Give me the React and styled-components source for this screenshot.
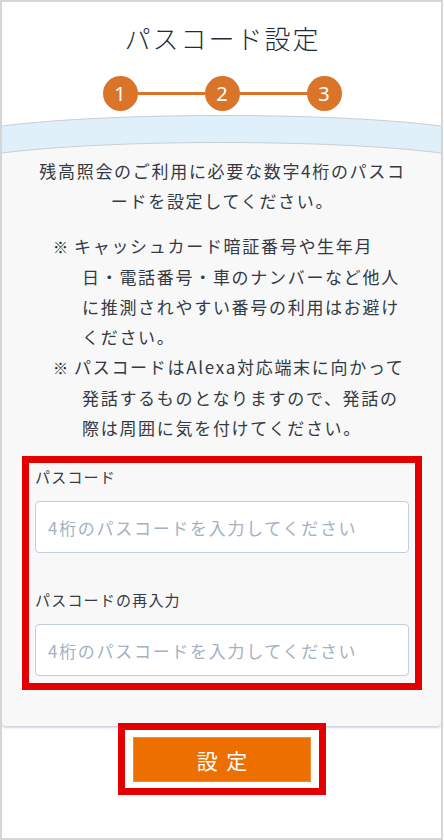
import React from 'react';
import styled, { createGlobalStyle } from 'styled-components';

const GlobalStyle = createGlobalStyle`
  html, body { margin: 0; padding: 0; background: #fff; }
  body {
    font-family: "Noto Sans CJK JP", "Noto Sans", sans-serif;
    color: #333a44;
  }
  * { box-sizing: border-box; }
`;

const Frame = styled.div`
  width: 443px;
  height: 840px;
  border: 2px solid #d5d5d5;
  background: #fff;
  display: flex;
  flex-direction: column;
  overflow: hidden;
`;

const Header = styled.header`
  display: flex;
  flex-direction: column;
  align-items: center;
  padding-top: 18px;
`;

const Title = styled.h1`
  margin: 0;
  font-size: 26px;
  font-weight: 300;
  line-height: 36px;
  letter-spacing: 2px;
  padding-left: 2px;
  color: #1d2a3a;
`;

const Steps = styled.div`
  display: flex;
  align-items: center;
  margin-top: 20px;
  margin-left: 1px;
`;

const StepCircle = styled.div`
  width: 35px;
  height: 35px;
  border-radius: 50%;
  background: #d97429;
  color: #fff;
  display: flex;
  align-items: center;
  justify-content: center;
  font-family: "Noto Sans", sans-serif;
  font-size: 20px;
  line-height: 1;
`;

const Connector = styled.div`
  width: 67px;
  height: 3px;
  background: #d97429;
`;

const WaveSvg = styled.svg`
  display: block;
  width: 439px;
  height: 40px;
  margin-top: 4px;
`;

const Panel = styled.main`
  background: #f8f8f8;
  display: flex;
  flex-direction: column;
  padding-bottom: 36px;
  border-radius: 0 0 4px 4px;
  box-shadow: 0 2px 2px rgba(120, 140, 165, 0.35);
`;

const Lead = styled.p`
  margin: 1px 0 0;
  text-align: center;
  font-size: 17px;
  line-height: 30px;
  letter-spacing: 1.7px;
  padding-left: 2px;
`;

const Notes = styled.ul`
  list-style: none;
  margin: 15px 0 0;
  padding: 0 0 0 80px;
  font-size: 17px;
  line-height: 30px;
  letter-spacing: 1.7px;
  white-space: nowrap;
`;

const Note = styled.li`
  text-indent: -29px;
`;

const Mark = styled.span`
  display: inline-block;
  width: 21px;
  text-indent: 0;
  font-size: 15px;
  letter-spacing: 0;
  color: #222831;
`;

const FormBox = styled.form`
  margin: 13px 19px 0 20px;
  border: 7px solid #e20000;
  padding: 2px 6px 7px;
  display: flex;
  flex-direction: column;
`;

const Label = styled.label`
  display: block;
  font-size: 15px;
  line-height: 24px;
  letter-spacing: 1.2px;
  color: #343c47;
  margin-top: ${(p) => (p.$second ? '35px' : '0')};
`;

const Input = styled.input`
  display: block;
  width: 100%;
  height: 52px;
  margin-top: 12px;
  border: 1px solid #c3cfdd;
  border-radius: 4px;
  background: #fff;
  padding: 0 12px;
  font-family: inherit;
  font-size: 17px;
  letter-spacing: 1.7px;
  color: #333a44;
  outline: none;
  &::placeholder {
    color: #a3b1c2;
  }
`;

const ButtonArea = styled.div`
  display: flex;
  justify-content: center;
  margin-top: -3px;
  position: relative;
  padding-left: 1px;
`;

const ButtonFrame = styled.div`
  border: 7px solid #e20000;
  padding: 7px 8px 6px;
  background: #fff;
`;

const SubmitButton = styled.button`
  display: flex;
  align-items: center;
  justify-content: center;
  width: 178px;
  height: 45px;
  background: #ec6f00;
  border: 1px solid #f38b35;
  color: #fff;
  font-family: "Noto Sans CJK JP", sans-serif;
  font-size: 21px;
  letter-spacing: 2px;
  padding: 0 0 0 2px;
  cursor: pointer;
`;

function Wave() {
  return (
    <WaveSvg viewBox="0 0 439 40" preserveAspectRatio="none">
      <path d="M0 11 C 110 -3, 330 -3, 439 11 L 439 38 C 330 24, 110 24, 0 38 Z" fill="#dff0fb" />
      <path d="M0 38 C 110 24, 330 24, 439 38 L 439 40 L 0 40 Z" fill="#f8f8f8" />
      <path d="M0 11 C 110 -3, 330 -3, 439 11" fill="none" stroke="#c9ced3" strokeWidth="1" />
      <path d="M0 38 C 110 24, 330 24, 439 38" fill="none" stroke="#c9ced3" strokeWidth="1" />
    </WaveSvg>
  );
}

export default function App() {
  return (
    <>
      <GlobalStyle />
      <Frame>
        <Header>
          <Title>パスコード設定</Title>
          <Steps>
            <StepCircle>1</StepCircle>
            <Connector />
            <StepCircle>2</StepCircle>
            <Connector />
            <StepCircle>3</StepCircle>
          </Steps>
        </Header>
        <Wave />
        <Panel>
          <Lead>
            残高照会のご利用に必要な数字4桁のパスコ
            <br />
            ードを設定してください。
          </Lead>
          <Notes>
            <Note>
              <Mark>※</Mark>キャッシュカード暗証番号や生年月
              <br />
              日・電話番号・車のナンバーなど他人
              <br />
              に推測されやすい番号の利用はお避け
              <br />
              ください。
            </Note>
            <Note>
              <Mark>※</Mark>パスコードはAlexa対応端末に向かって
              <br />
              発話するものとなりますので、発話の
              <br />
              際は周囲に気を付けてください。
            </Note>
          </Notes>
          <FormBox onSubmit={(e) => e.preventDefault()}>
            <Label htmlFor="pc1">パスコード</Label>
            <Input id="pc1" type="password" placeholder="4桁のパスコードを入力してください" />
            <Label htmlFor="pc2" $second>
              パスコードの再入力
            </Label>
            <Input id="pc2" type="password" placeholder="4桁のパスコードを入力してください" />
          </FormBox>
        </Panel>
        <ButtonArea>
          <ButtonFrame>
            <SubmitButton type="button">設 定</SubmitButton>
          </ButtonFrame>
        </ButtonArea>
      </Frame>
    </>
  );
}
